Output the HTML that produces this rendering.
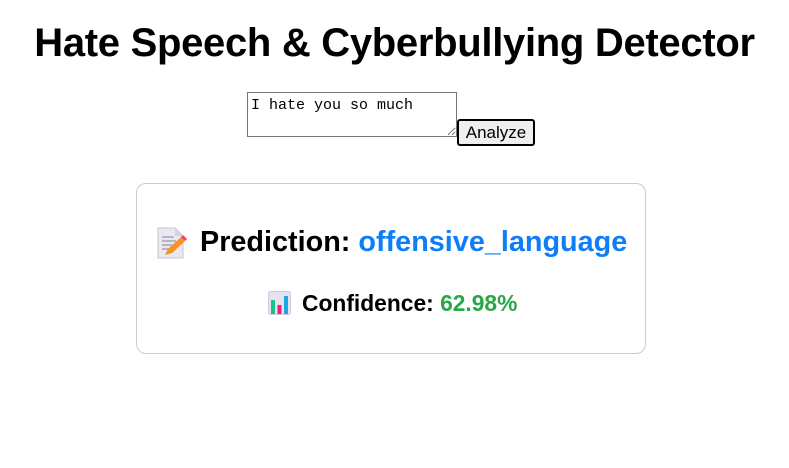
<!DOCTYPE html>
<html><head><meta charset="utf-8"><style>
body{margin:0;width:789px;height:468px;background:#fff;font-family:"Liberation Sans",sans-serif;position:relative;overflow:hidden}
.a{position:absolute;white-space:nowrap}
h1{position:absolute;left:0;width:789px;top:22px;margin:0;text-align:center;font-size:40px;font-weight:bold;letter-spacing:-0.3px;line-height:42px}
textarea{position:absolute;left:247px;top:92px;width:210px;height:45px;box-sizing:border-box;border:1px solid #767676;font-family:"Liberation Mono",monospace;font-size:15px;padding:4px 3px;resize:both;margin:0}
button{position:absolute;left:457px;top:119px;width:78px;height:27px;box-sizing:border-box;border:2px solid #000;border-radius:3px;background:#efefef;font-family:"Liberation Sans",sans-serif;font-size:17px;padding:0}
.card{position:absolute;left:136px;top:183px;width:510px;height:171px;box-sizing:border-box;border:1px solid #ccc;border-radius:10px}
</style></head><body>
<h1>Hate Speech &amp; Cyberbullying Detector</h1>
<textarea>I hate you so much</textarea>
<button>Analyze</button>
<div class="card"></div>
<svg class="a" style="left:157px;top:227px" width="30" height="32" viewBox="0 0 30 32">
<path d="M1 1h17l8 8v22H1z" fill="#ece8f2" stroke="#c9c3d6"/><path d="M18 1v8h8" fill="#d6d0e0"/>
<path d="M5 10h12M5 14h14M5 18h10M5 22h8" stroke="#9a94a8" stroke-width="1.3"/>
<path d="M8 28l3-6 13-12 4 4-13 12z" fill="#f7931e"/><path d="M24 10l2-2 4 4-2 2z" fill="#ef3f6f"/></svg>
<div class="a" style="left:200px;top:226px;font-size:28.8px;font-weight:bold">Prediction: <span style="color:#0d7dfa">offensive_language</span></div>
<svg class="a" style="left:268px;top:291px" width="23" height="24" viewBox="0 0 23 24">
<rect x="0.5" y="0.5" width="22" height="23" rx="2" fill="#e6e2ee" stroke="#cfc9da"/>
<rect x="3" y="9" width="4" height="14" fill="#16c48a"/><rect x="9.5" y="14" width="4" height="9" fill="#ec1f7b"/><rect x="16" y="5" width="4" height="18" fill="#1aa7e8"/></svg>
<div class="a" style="left:302px;top:290px;font-size:22.8px;font-weight:bold">Confidence: <span style="color:#28a745">62.98%</span></div>
</body></html>
